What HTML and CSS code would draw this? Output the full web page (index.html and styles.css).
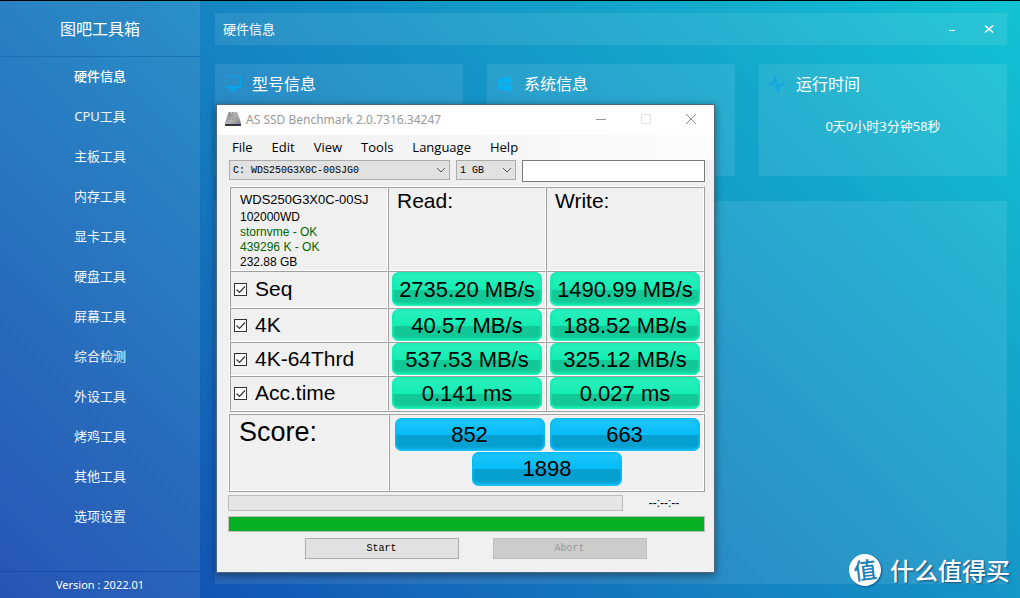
FILE: index.html
```html
<!DOCTYPE html>
<html lang="zh-CN">
<head>
<meta charset="utf-8">
<title>图吧工具箱</title>
<link rel="stylesheet" href="styles.css">
</head>
<body>
<div class="app">
  <aside class="sidebar">
    <h1 class="brand">图吧工具箱</h1>
    <nav class="nav">
      <a class="nav-link active" href="#">硬件信息</a>
      <a class="nav-link" href="#">CPU工具</a>
      <a class="nav-link" href="#">主板工具</a>
      <a class="nav-link" href="#">内存工具</a>
      <a class="nav-link" href="#">显卡工具</a>
      <a class="nav-link" href="#">硬盘工具</a>
      <a class="nav-link" href="#">屏幕工具</a>
      <a class="nav-link" href="#">综合检测</a>
      <a class="nav-link" href="#">外设工具</a>
      <a class="nav-link" href="#">烤鸡工具</a>
      <a class="nav-link" href="#">其他工具</a>
      <a class="nav-link" href="#">选项设置</a>
    </nav>
    <footer class="version">Version : 2022.01</footer>
  </aside>
  <main class="main">
    <header class="topbar">
      <h2 class="topbar-title">硬件信息</h2>
      <button class="topbar-btn" type="button" aria-label="最小化"><svg width="12" height="12"><path d="M3 7.500h6" stroke="#fff"/></svg></button>
      <button class="topbar-btn" type="button" aria-label="关闭"><svg width="12" height="12"><path d="M2 2.500l8 7M10 2.500l-8 7" stroke="#fff" stroke-width="1.500"/></svg></button>
    </header>
    <section class="cards">
      <article class="card">
        <h3 class="card-title"><svg width="18" height="18" viewBox="0 0 18 18"><path d="M1.500 1.500H16.500V12.500H1.500Z" fill="none" stroke="#08a4ec"/><path d="M1 11H17V13H1ZM7 13H11V14H13V16H5V14H7Z" fill="#0aa4ee"/></svg>型号信息</h3>
      </article>
      <article class="card">
        <h3 class="card-title"><svg width="18" height="18" viewBox="0 0 18 18"><path d="M2 4L7 3V8.500H2ZM8 2.800L16 1.300V8.500H8ZM2 9.500H7V15L2 14ZM8 9.500H16V16.700L8 15.200Z" fill="#0ab0f2"/></svg>系统信息</h3>
      </article>
      <article class="card">
        <h3 class="card-title"><svg width="18" height="18" viewBox="0 0 18 18"><path d="M1 9.500H5L7 2L10 16L12 9.500H17" fill="none" stroke="#08a5ea" stroke-width="1.300" stroke-linejoin="round"/></svg>运行时间</h3>
        <p class="uptime">0天0小时3分钟58秒</p>
      </article>
    </section>
    <section class="details"></section>
  </main>

  <section class="window">
    <header class="titlebar">
      <svg width="18" height="16" viewBox="0 0 18 16"><defs><linearGradient id="disk" x2="1" y2="1"><stop offset="0" stop-color="#777"/><stop offset=".5" stop-color="#b4b4b4"/><stop offset="1" stop-color="#777"/></linearGradient></defs><path d="M4 3Q4 1 6 1H12Q14 1 14 3L17 12V14Q17 15 16 15H2Q1 15 1 14V12Z" fill="url(#disk)"/><path d="M1 13H17V14Q17 15 16 15H2Q1 15 1 14Z" fill="#333"/><path d="M14 13H16V14H14Z" fill="#22c"/><path d="M7 1L8 3M11 1L10 3" stroke="#ddd"/><path d="M5 6.500H13M5 8.500H13" stroke="#999" stroke-dasharray="2 1"/></svg>
      <span class="window-title">AS SSD Benchmark 2.0.7316.34247</span>
      <button class="win-btn" type="button" aria-label="Minimize"><svg width="12" height="12"><path d="M1 6.500h10" stroke="#999"/></svg></button>
      <button class="win-btn" type="button" aria-label="Maximize" disabled><svg width="12" height="12"><path d="M1.500 1.500h9v9h-9z" fill="none" stroke="#e2e2e2"/></svg></button>
      <button class="win-btn" type="button" aria-label="Close"><svg width="12" height="12"><path d="M1 1l10 10M11 1L1 11" stroke="#888"/></svg></button>
    </header>
    <nav class="menu">
      <button class="menu-item" type="button">File</button>
      <button class="menu-item" type="button">Edit</button>
      <button class="menu-item" type="button">View</button>
      <button class="menu-item" type="button">Tools</button>
      <button class="menu-item" type="button">Language</button>
      <button class="menu-item" type="button">Help</button>
    </nav>
    <div class="content">
      <div class="selectors">
        <select class="combo combo-drive" aria-label="Drive"><option>C: WDS250G3X0C-00SJG0</option></select>
        <select class="combo combo-size" aria-label="Test size"><option>1 GB</option></select>
        <input class="note" type="text" aria-label="Note">
      </div>
      <table class="results">
        <tbody>
        <tr class="row-head">
          <td class="device">
            <div class="model">WDS250G3X0C-00SJ</div>
            <div>102000WD</div>
            <div class="ok">stornvme - OK</div>
            <div class="ok">439296 K - OK</div>
            <div>232.88 GB</div>
          </td>
          <th class="heading" scope="col">Read:</th>
          <th class="heading" scope="col">Write:</th>
        </tr>
        <tr class="row-seq">
          <th scope="row"><label class="test"><input class="check" type="checkbox" checked>Seq</label></th>
          <td><div class="pill">2735.20 MB/s</div></td>
          <td><div class="pill">1490.99 MB/s</div></td>
        </tr>
        <tr>
          <th scope="row"><label class="test"><input class="check" type="checkbox" checked>4K</label></th>
          <td><div class="pill">40.57 MB/s</div></td>
          <td><div class="pill">188.52 MB/s</div></td>
        </tr>
        <tr>
          <th scope="row"><label class="test"><input class="check" type="checkbox" checked>4K-64Thrd</label></th>
          <td><div class="pill">537.53 MB/s</div></td>
          <td><div class="pill">325.12 MB/s</div></td>
        </tr>
        <tr class="row-last">
          <th scope="row"><label class="test"><input class="check" type="checkbox" checked>Acc.time</label></th>
          <td><div class="pill">0.141 ms</div></td>
          <td><div class="pill">0.027 ms</div></td>
        </tr>
        </tbody>
      </table>
      <div class="score">
        <div class="score-label">Score:</div>
        <div class="score-values">
          <div class="pill blue">852</div>
          <div class="pill blue">663</div>
          <div class="pill blue total">1898</div>
        </div>
      </div>
      <div class="progress-row">
        <div class="bar"></div>
        <span class="eta">--:--:--</span>
      </div>
      <div class="bar full"></div>
      <div class="actions">
        <button class="action" type="button">Start</button>
        <button class="action" type="button" disabled>Abort</button>
      </div>
    </div>
  </section>

  <div class="watermark"><span class="seal">值</span><span>什么值得买</span></div>
</div>
</body>
</html>
```
FILE: styles.css
```css
* { box-sizing: border-box; }
body {
  margin: 0;
  font-family: "Noto Sans", "Noto Sans CJK SC", sans-serif;
  font-size: 13px;
  color: #fff;
}
h1, h2, h3, p { margin: 0; font-weight: 400; }
button { font: inherit; color: inherit; background: none; border: 0; padding: 0; }
svg { display: block; flex: none; }

.app {
  position: relative;
  display: flex;
  min-height: 100vh;
  border-top: 1px solid #000;
  background: linear-gradient(45deg, #1244ae 0%, #1586c2 50%, #12c3d3 100%);
}

.sidebar {
  display: flex;
  flex-direction: column;
  width: 200px;
  flex: none;
  background: rgba(255, 255, 255, 0.09);
  text-align: center;
}
.brand {
  padding-top: 2px;
  font-size: 16px;
  line-height: 53px;
  border-bottom: 1px solid #1a72bc;
}
.nav { display: flex; flex-direction: column; flex: 1; }
.nav-link { height: 40px; color: #f2f7fc; text-decoration: none; line-height: 38px; }
.nav-link.active { color: #fff; font-weight: 500; }
.version { font-size: 11px; line-height: 26px; border-top: 1px solid #1a4cae; }

.main {
  display: flex;
  flex-direction: column;
  flex: 1;
  padding: 12px 13px 14px 15px;
}
.topbar { display: flex; align-items: center; height: 32px; padding: 0 12px 0 8px; background: rgba(255, 255, 255, 0.09); }
.topbar-title { flex: 1; padding-bottom: 2px; font-size: 13px; }
.topbar-btn { width: 12px; height: 12px; margin-left: 25px; }
.cards { display: grid; grid-template-columns: repeat(3, 1fr); gap: 24px; margin: 19px 0 25px; }
.card { height: 112px; padding: 8px 9px; background: rgba(255, 255, 255, 0.09); }
.card-title { display: flex; align-items: center; gap: 10px; font-size: 16px; line-height: 24px; }
.uptime { padding-top: 18px; text-align: center; font-size: 13px; line-height: 24px; }
.details { flex: 1; background: rgba(255, 255, 255, 0.09); }

.window {
  position: absolute;
  left: 216px;
  top: 103px;
  width: 499px;
  border: 1px solid #4a6a80;
  background: #f0f0f0;
  color: #000;
  box-shadow: 0 2px 8px rgba(0, 0, 0, 0.45);
}
.titlebar { display: flex; align-items: center; height: 30px; padding: 0 17px 2px 7px; background: #fff; }
.window-title { flex: 1; padding-left: 4px; font-size: 12px; color: #999; }
.win-btn { width: 12px; height: 12px; margin-left: 33px; }
.menu { display: flex; gap: 19px; height: 25px; padding: 0 15px; background: linear-gradient(90deg, #f0f0f0, #fcfcfc); font-family: "Open Sans", sans-serif; }
.menu-item { line-height: 25px; }

.content { padding: 0 9px 13px 11px; }
.selectors { display: flex; gap: 6px; padding-left: 1px; }
.combo {
  appearance: none;
  height: 20px;
  margin: 0;
  padding: 0 3px;
  border: 1px solid #adadad;
  border-radius: 0;
  background: #e1e1e1 url("data:image/svg+xml,%3Csvg xmlns='http://www.w3.org/2000/svg' width='10' height='6'%3E%3Cpath d='M1 1l4 4 4-4' fill='none' stroke='%23555'/%3E%3C/svg%3E") no-repeat right 3px center;
  color: #000;
  font: 10px "Liberation Mono", monospace;
}
.combo-drive { width: 221px; }
.combo-size { width: 60px; }
.note { flex: 1; min-width: 0; height: 22px; border: 1px solid #7a7a7a; background: #fff; }

.results {
  width: calc(100% - 1px);
  margin: 4px 0 0 1px;
  table-layout: fixed;
  border-collapse: separate;
  border-spacing: 0;
  border: 1px solid #fff;
  border-right-color: #a0a0a0;
  border-bottom-color: #a0a0a0;
  font: 21px "Liberation Sans", Arial, sans-serif;
}
.results th, .results td {
  height: 34px;
  padding: 0 3px;
  border: 1px solid #fff;
  border-left-color: #a0a0a0;
  border-top-color: #a0a0a0;
  font-weight: 400;
  text-align: left;
  vertical-align: top;
}
.results .row-head > * { height: 84px; }
.results .row-seq > * { height: 37px; }
.results .row-last > * { height: 35px; }
.results .device { padding: 2px 0 0 9px; font-size: 12px; line-height: 15px; white-space: nowrap; }
.device .model { font-size: 13px; line-height: 20px; }
.ok { color: #006400; }
.results .heading { padding: 1px 8px; line-height: 24px; }
.test { display: flex; align-items: center; gap: 8px; line-height: 32px; }
.row-seq .test { line-height: 34px; }
.check {
  appearance: none;
  width: 13px;
  height: 13px;
  margin: 0;
  border: 1px solid #333;
  background: #fff url("data:image/svg+xml,%3Csvg xmlns='http://www.w3.org/2000/svg' width='11' height='11'%3E%3Cpath d='M1.500 5.500l3 3 5.500-6' fill='none' stroke='%23333' stroke-width='1.200'/%3E%3C/svg%3E") no-repeat center;
}
.pill {
  width: 150px;
  height: 32px;
  border-radius: 7px;
  background: linear-gradient(#2cf0c0 0, #14edb2 52%, #12c896 53%, #12c896 85%, #14e8ae 100%);
  box-shadow: inset 0 0 2px 2px rgba(20, 235, 178, 0.8), inset 0 -1px 1px #7df5d5;
  font: 22px/34px "Liberation Sans", Arial, sans-serif;
  text-align: center;
}
.row-seq .pill { height: 34px; line-height: 36px; }
.pill.blue {
  height: 33px;
  background: linear-gradient(#1fc6fa 0, #07bcf6 50%, #059fd0 51%, #059fd0 85%, #0cbdf5 100%);
  box-shadow: inset 0 0 2px 2px rgba(10, 185, 245, 0.8), inset 0 -1px 1px #7fdcff;
}

.score {
  display: grid;
  grid-template-columns: 160px 1fr;
  margin-top: 1px;
  border: 1px solid #fff;
  border-right-color: #a0a0a0;
  border-bottom-color: #a0a0a0;
}
.score > * { height: 77px; border: 1px solid #fff; border-left-color: #a0a0a0; border-top-color: #a0a0a0; }
.score-label { padding-left: 9px; font: 27px/34px "Liberation Sans", Arial, sans-serif; }
.score-values { display: grid; grid-template-columns: 150px 150px; justify-content: center; align-content: start; column-gap: 5px; row-gap: 1px; padding: 3px 0 0 1px; }
.score-values .total { grid-column: 1 / 3; height: 34px; justify-self: center; }

.progress-row { display: flex; align-items: center; margin: 3px 0 5px; }
.bar { width: 395px; height: 16px; border: 1px solid #bcbcbc; background: #e6e6e6; }
.bar.full { width: auto; background: #06b025; }
.eta { flex: 1; text-align: center; font: 12px/16px "Liberation Sans", Arial, sans-serif; }
.actions { display: grid; grid-template-columns: 154px 154px; justify-content: center; gap: 34px; padding: 6px 0 0 18px; }
.action { height: 21px; border: 1px solid #adadad; background: #e1e1e1; font: 10px "Liberation Mono", monospace; }
.action:disabled { border-color: #bfbfbf; background: #ccc; color: #999; }

.watermark {
  position: absolute;
  right: 10px;
  bottom: 10px;
  display: flex;
  align-items: center;
  gap: 9px;
  font: 500 24px/36px "Noto Sans CJK SC", sans-serif;
  text-shadow: 1px 1px 2px rgba(0, 40, 90, 0.7);
}
.seal {
  width: 32px;
  height: 32px;
  border-radius: 50%;
  background: #fff;
  color: #2280b5;
  box-shadow: 1px 1px 2px rgba(0, 40, 90, 0.5);
  font: 500 23px/30px "Noto Sans CJK SC", sans-serif;
  text-align: center;
  text-shadow: none;
  transform: rotate(-7deg);
}
```
